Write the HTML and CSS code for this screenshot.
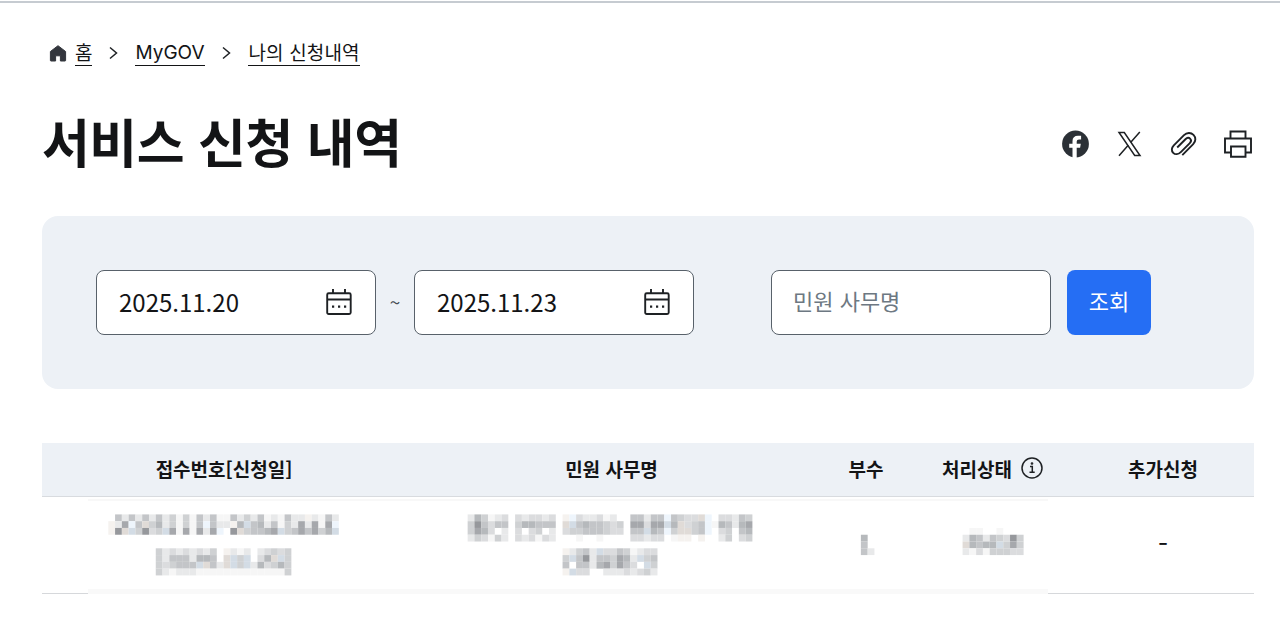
FILE: index.html
```html
<!DOCTYPE html>
<html lang="ko">
<head>
  <meta charset="UTF-8" />
  <meta name="viewport" content="width=device-width, initial-scale=1.0"/>
  <title>서비스 신청 내역</title>
  <link rel="stylesheet" href="styles.css">
</head>
<body>

  <div class="container">
    <nav class="breadcrumb">
      <a href="#" class="home">
        <svg width="18" height="17" viewBox="0 0 18 17"><path d="M9 .7 16.6 6.500V15.400Q16.600 16 16 16H11.400V10.800H6.600V16H2Q1.400 16 1.400 15.400V6.500Z" fill="#33363d" stroke="#33363d" stroke-linejoin="round"/></svg>
        <span>홈</span>
      </a>
      <svg class="arrow" width="9" height="14" viewBox="0 0 9 14"><path d="M1 1.500 7.500 7 1 12.500"/></svg>
      <a href="#"><span class="latin">MyGOV</span></a>
      <svg class="arrow" width="9" height="14" viewBox="0 0 9 14"><path d="M1 1.500 7.500 7 1 12.500"/></svg>
      <a href="#"><span class="current">나의 신청내역</span></a>
    </nav>

    <header class="page-head">
      <h1>서비스 신청 내역</h1>
      <div class="share">
        <svg width="28" height="28" viewBox="0 0 28 28"><circle cx="13.500" cy="14" r="13.400" fill="#2b3036"/><path d="M10.500 28V17.700H7.200V13.700H10.500V11.200Q10.500 5.700 16 5.700H19.100V9.400H17Q14.700 9.400 14.700 11.500V13.700H18.800L18.100 17.700H14.700V28Z" fill="#fff"/></svg>
        <svg width="28" height="28" viewBox="0 0 28 28" fill="none" stroke="#1e2124"><path d="M3 2.500H8.300L24 25.500H18.700Z" stroke-width="1.500"/><path d="M23.800 2 14.800 12.200M12.200 15.200 3 25.800" stroke-width="1.500"/></svg>
        <svg width="28" height="28" viewBox="0 0 28 28" fill="none" stroke="#1e2124" stroke-width="1.900"><path d="M12.300 25.100 23.200 14.200C26 11.400 26 7.300 23.500 4.800S16.800 2.300 14 5.100L3.800 15.300C1.300 17.800 1.300 20.900 3.200 22.800S8.300 24.600 10.800 22.100L19.800 13.100C21.300 11.600 21.300 9.800 20.100 8.600S17.200 7.500 15.700 9L7.200 17.500"/></svg>
        <svg width="28" height="28" viewBox="0 0 28 28" fill="none" stroke="#1e2124" stroke-width="1.900"><path d="M6.500 8.500V1.500H21.500V8.500M6.500 22.500H1V8.500H27V22.500H21.500M7 16.500H21.500V26.700H7Z"/></svg>
      </div>
    </header>

    <form class="search-box">
      <div class="field">
        <span>2025.11.20</span>
        <svg width="26" height="28" viewBox="0 0 26 28"><use href="#calendar"/></svg>
      </div>
      <span class="tilde">~</span>
      <div class="field">
        <span>2025.11.23</span>
        <svg width="26" height="28" viewBox="0 0 26 28"><use href="#calendar"/></svg>
      </div>
      <input type="text" class="field keyword" placeholder="민원 사무명" />
      <button type="button" class="btn">조회</button>
    </form>

    <div class="table-wrap">
      <table>
        <colgroup>
          <col class="c-number"><col class="c-name"><col class="c-count"><col class="c-state"><col class="c-extra">
        </colgroup>
        <thead>
          <tr>
            <th>접수번호[신청일]</th>
            <th>민원 사무명</th>
            <th>부수</th>
            <th>
              <span class="state">처리상태
                <svg width="22" height="22" viewBox="0 0 22 22" fill="none" stroke="#1e2124" stroke-width="1.500"><circle cx="11" cy="11" r="10"/><path d="M9 9.500H11.300V15M8.500 15.200H13.700"/><circle cx="11" cy="6.500" r=".6"/></svg>
              </span>
            </th>
            <th>추가신청</th>
          </tr>
        </thead>
        <tbody>
          <tr><td></td><td></td><td></td><td></td><td class="extra">-</td></tr>
        </tbody>
      </table>
      <svg class="mask" id="mask" width="960" height="97"></svg>
    </div>
  </div>

  <svg class="symbols">
    <symbol id="calendar" viewBox="0 0 26 28">
      <g fill="none" stroke="#1e2124" stroke-width="1.900">
        <rect x="1.200" y="5.200" width="23.500" height="20.800" rx="1.500"/>
        <path d="M1 11.500H25M7 1V5M19 1V5"/>
      </g>
      <path d="M6 17.500H8.200V19.700H6ZM12 17.500H14.200V19.700H12ZM18 17.500H20.200V19.700H18Z" fill="#1e2124"/>
    </symbol>
  </svg>

  <script>
    // personal data in the row is pixelated
    const size = 6.78;
    const colors = {
      1: "#f6f6f6", 2: "#e8e9ea", 3: "#dbdcde", 4: "#cfd1d3", 5: "#c3c5c8",
      6: "#b6b9bc", 7: "#a6a8ac", 8: "#96989c",
      b: "#d3dce5", w: "#e0dbd7", p: "#eef5fc", y: "#f5f2ef"
    };
    const blocks = [
      { col: 0, row: 0, rows: [
        ".5252525241415251152425121522y2152",
        "y27p5w46241415p522y6b562514272717p",
        "y8wb4834b7171727p.8w45567b4575746b"
      ]},
      { col: 7, row: 5, rows: [
        "423232324.y212.23434",
        "425552665.wb4b.36wb4",
        "434555bw52wb4b263464",
        "42122211111111111114"
      ]},
      { col: 53, row: 0, rows: [
        "264123.323323.yp322312..55255p5433wp.33254",
        "485355.466555.wb5655434.77377b6w345p165267",
        "4763.2.3.34.2.344555433.55b65p4ww45p.34.56",
        "243142.323132...1..1....33233.1yy.y..24.34"
      ]},
      { col: 67, row: 5, rows: [
        "y2452b33541233",
        "4b582554762b45",
        "5.552674753.b4",
        "yb33..22232342"
      ]},
      { col: 111, row: 3, rows: ["6.", "5.", "52"] },
      { col: 126, row: 2, rows: [
        ".11..1...",
        "265254384",
        "w6566b474",
        "213144433"
      ]}
    ];

    const mask = document.getElementById("mask");
    function addRect(x, y, w, h, fill) {
      const rect = document.createElementNS("http://www.w3.org/2000/svg", "rect");
      rect.setAttribute("x", x);
      rect.setAttribute("y", y);
      rect.setAttribute("width", w);
      rect.setAttribute("height", h);
      rect.setAttribute("fill", fill);
      mask.appendChild(rect);
    }

    addRect(0, 0, 960, 2, "#f8f8f8");
    addRect(0, 90, 960, 7, "#f9f9f9");

    blocks.forEach((block) => {
      block.rows.forEach((line, r) => {
        [...line].forEach((c, i) => {
          if (c === ".") return;
          addRect(20.3 + (block.col + i) * size, 15.4 + (block.row + r) * size, size, size, colors[c]);
        });
      });
    });
  </script>

</body>
</html>
```
FILE: styles.css
```css
* {
  box-sizing: border-box;
}

body {
  margin: 0;
  font-family: "Noto Sans CJK KR", sans-serif;
  font-size: 19px;
  color: #131416;
  background-color: #fff;
  border-top: 1px solid #fff;
  overflow: hidden;
}

.container {
  border-top: 2px solid #c6cbd1;
  padding: 33px 26px 0 42px;
}

.breadcrumb {
  display: flex;
  align-items: center;
  height: 33px;
  padding-left: 7px;
}

.breadcrumb a {
  display: flex;
  align-items: center;
  color: #131416;
  text-decoration: none;
}

.breadcrumb span {
  height: 26px;
  line-height: 23px;
  border-bottom: 1px solid #131416;
}

.breadcrumb .latin {
  width: 70px;
  font-family: Inter, sans-serif;
  line-height: 26px;
  white-space: nowrap;
}

.breadcrumb .current {
  letter-spacing: .15px;
}

.home svg {
  margin: 2px 8px 0 0;
}

.arrow {
  margin: 1px 17px 0;
  fill: none;
  stroke: #1e2124;
  stroke-width: 1.5;
}

.page-head {
  display: flex;
  align-items: center;
  justify-content: space-between;
  height: 80px;
  margin-top: 32px;
}

h1 {
  margin: 0;
  font-size: 52px;
  line-height: 80px;
  letter-spacing: -.5px;
}

.share {
  display: flex;
  gap: 26px;
  padding: 5px 2px 0 0;
}

.search-box {
  display: flex;
  align-items: center;
  height: 173px;
  margin-top: 35px;
  padding: 0 54px;
  background-color: #edf1f6;
  border-radius: 16px;
}

.field {
  display: flex;
  align-items: center;
  justify-content: space-between;
  width: 280px;
  height: 65px;
  padding: 0 23px 2px 22px;
  font-size: 24px;
  background-color: #fff;
  border: 1px solid #58616a;
  border-radius: 8px;
}

.tilde {
  width: 38px;
  padding-bottom: 2px;
  text-align: center;
  color: #464c53;
}

.keyword {
  margin-left: 77px;
  padding-left: 21px;
  padding-bottom: 5px;
  font-family: inherit;
  font-size: 22px;
}

.keyword::placeholder {
  color: #6d7882;
}

.btn {
  width: 84px;
  height: 65px;
  margin-left: 16px;
  padding: 0 0 5px;
  font-family: inherit;
  font-size: 22px;
  color: #fff;
  background-color: #256ef4;
  border: none;
  border-radius: 8px;
}

.table-wrap {
  position: relative;
  margin-top: 54px;
}

table {
  width: 100%;
  table-layout: fixed;
  border-collapse: separate;
  border-spacing: 0;
}

.c-number { width: 364px; }
.c-name { width: 411px; }
.c-count { width: 98px; }
.c-state { width: 157px; }

th {
  height: 54px;
  padding: 0 0 3px;
  background-color: #edf1f6;
  border-bottom: 1px solid #d8dbdf;
}

td {
  height: 97px;
  padding: 0 0 2px;
  text-align: center;
  border-bottom: 1px solid #d6d8db;
}

.extra {
  padding-bottom: 4px;
  font-family: Inter, sans-serif;
  font-size: 23px;
}

.state {
  display: flex;
  align-items: center;
  justify-content: center;
  gap: 9px;
  margin-right: 2px;
}

/* covers the row from the first to the fourth column */
.mask {
  position: absolute;
  left: 46px;
  top: 56px;
  background-color: #fff;
}

.symbols {
  position: absolute;
  width: 0;
  height: 0;
}
```
